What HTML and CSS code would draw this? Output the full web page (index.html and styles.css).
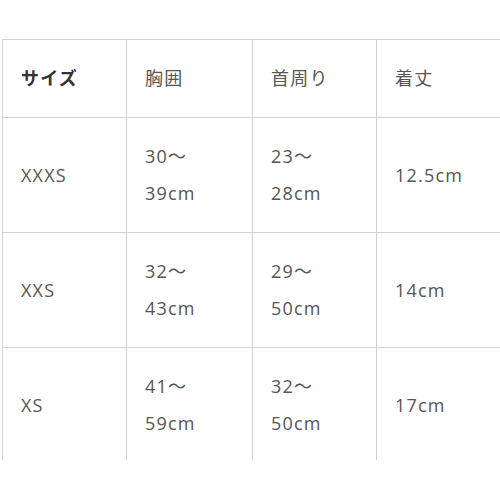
FILE: index.html
```html
<!DOCTYPE html>
<html lang="ja">
<head>
<meta charset="utf-8">
<link rel="stylesheet" href="styles.css">
</head>
<body>
<div class="clip">
  <table class="size-table">
    <colgroup>
      <col class="c1"><col class="c2"><col class="c3"><col class="c4">
    </colgroup>
    <tr class="head">
      <th>サイズ</th>
      <td>胸囲</td>
      <td>首周り</td>
      <td>着丈</td>
    </tr>
    <tr>
      <td>XXXS</td>
      <td>30～<br>39cm</td>
      <td>23～<br>28cm</td>
      <td>12.5cm</td>
    </tr>
    <tr>
      <td>XXS</td>
      <td>32～<br>43cm</td>
      <td>29～<br>50cm</td>
      <td>14cm</td>
    </tr>
    <tr>
      <td>XS</td>
      <td>41～<br>59cm</td>
      <td>32～<br>50cm</td>
      <td>17cm</td>
    </tr>
  </table>
</div>
</body>
</html>
```
FILE: styles.css
```css
html, body {
  margin: 0;
  padding: 0;
  background: #fff;
}
body {
  width: 500px;
  height: 500px;
  overflow: hidden;
}
.clip {
  margin-top: 39px;
  margin-left: 2px;
  height: 421px;
  width: 510px;
  overflow: hidden;
}
.size-table {
  border-collapse: collapse;
  table-layout: fixed;
  width: 500px;
  font-family: "Open Sans", "Noto Sans CJK JP", sans-serif;
  font-size: 18px;
  letter-spacing: 1.2px;
  line-height: 37px;
  color: #555;
}
.c1 { width: 124px; }
.c2 { width: 126px; }
.c3 { width: 124px; }
.c4 { width: 126px; }
.size-table th,
.size-table td {
  border: 1px solid #d2d2d2;
  padding: 20px 17px 20px 18px;
  text-align: left;
  vertical-align: middle;
  font-weight: 400;
}
.size-table th {
  font-weight: 700;
  color: #333;
}
```
